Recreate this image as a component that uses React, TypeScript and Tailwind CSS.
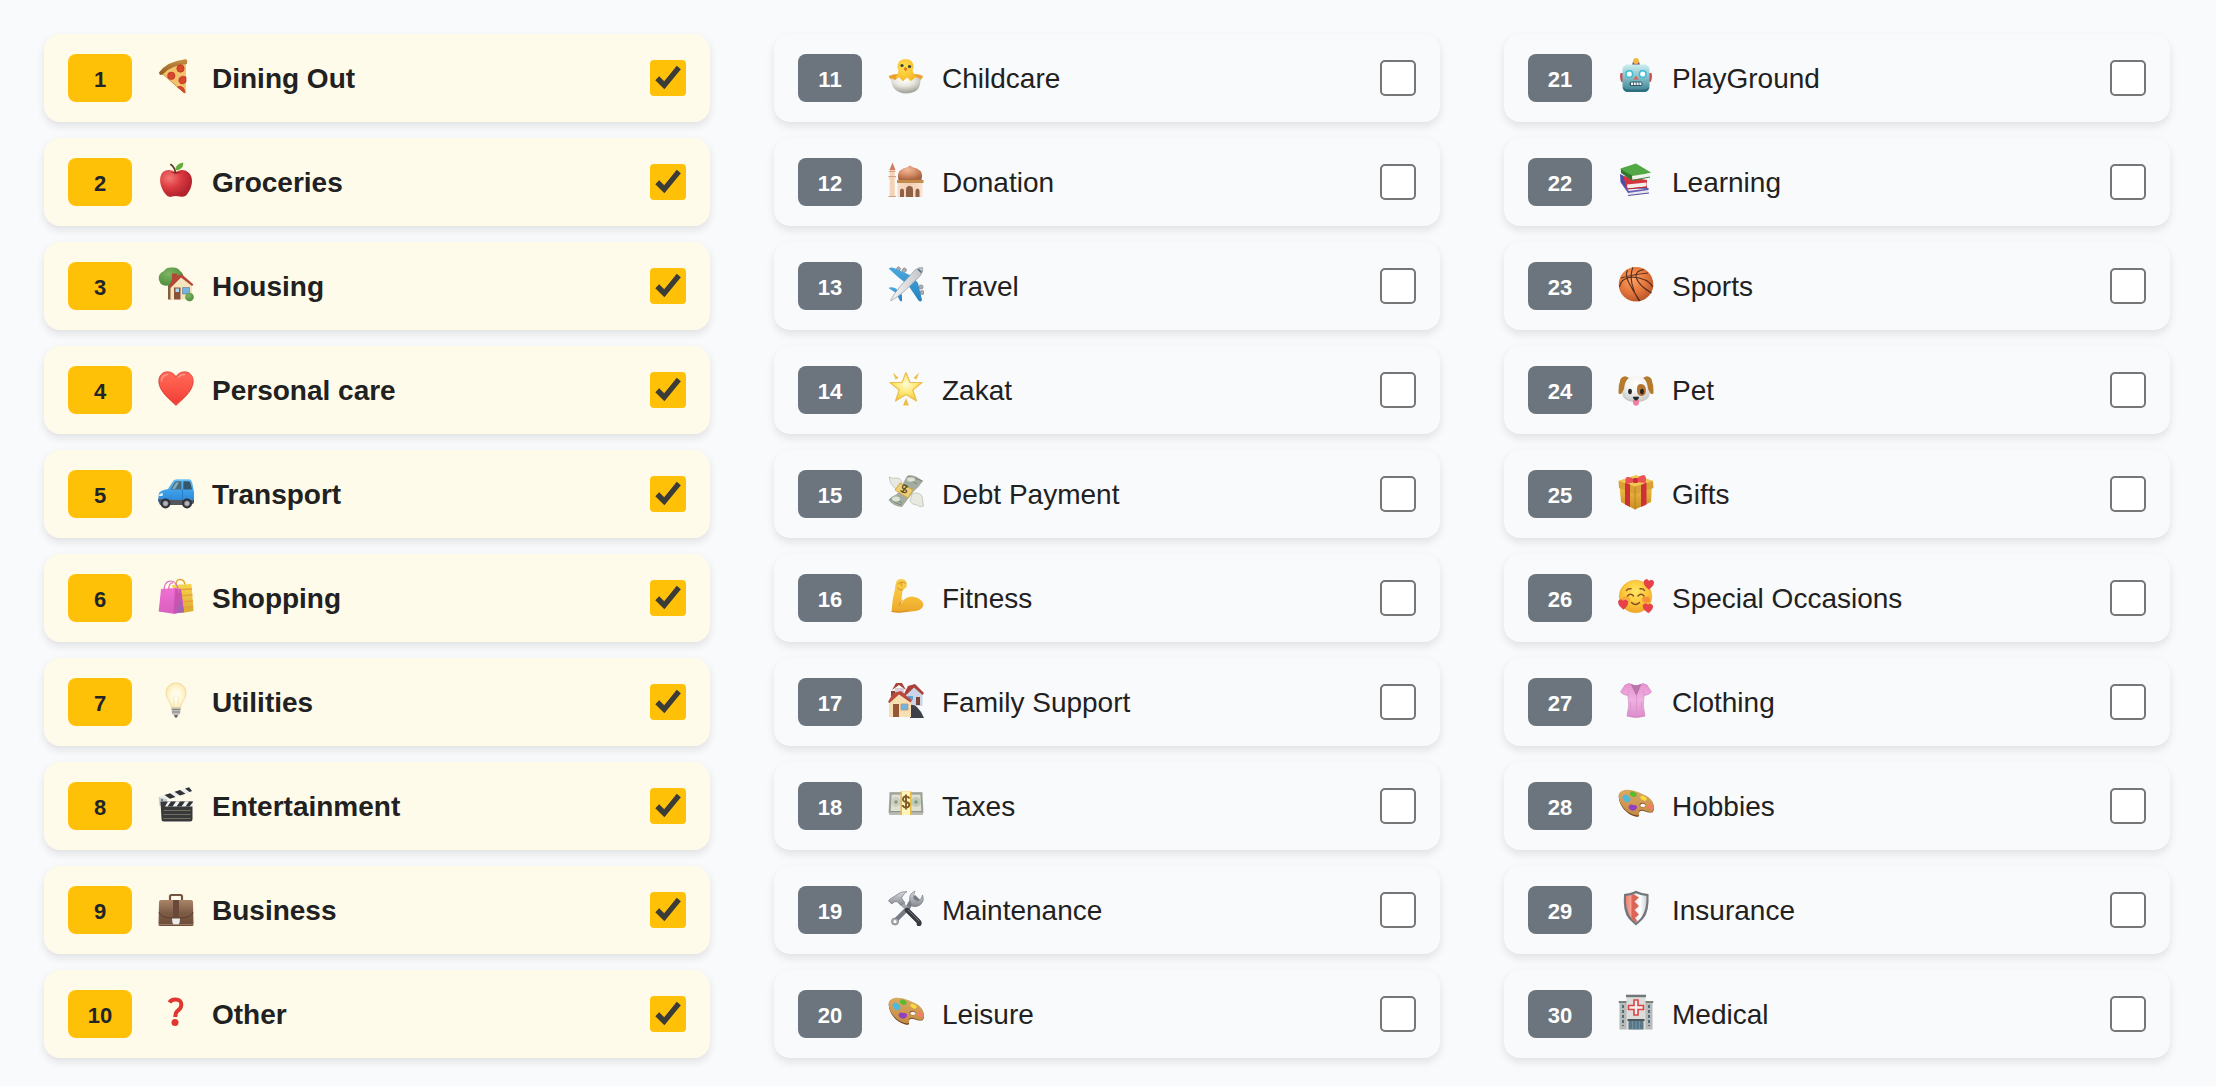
import type { ReactNode } from 'react';

type Category = { name: string; icon: ReactNode };

const Gradient = ({ id, stops, across }: { id: string; stops: string[]; across?: boolean }) => (
  <linearGradient id={id} x1="0" y1="0" x2={across ? 1 : 0} y2={across ? 0 : 1}>
    {stops.map((color, i) => (
      <stop key={i} offset={i / (stops.length - 1)} stopColor={color} />
    ))}
  </linearGradient>
);

const Radial = ({ id, stops, cx = 0.4, cy = 0.35 }: { id: string; stops: string[]; cx?: number; cy?: number }) => (
  <radialGradient id={id} cx={cx} cy={cy} r="0.7">
    {stops.map((color, i) => (
      <stop key={i} offset={i / (stops.length - 1)} stopColor={color} />
    ))}
  </radialGradient>
);

const Paints = () => (
  <svg className="absolute h-0 w-0" aria-hidden="true">
    <defs>
      <Gradient id="crust" stops={['#c99045', '#8f5a20']} />
      <Radial id="apple" stops={['#f37a76', '#dc3c42', '#b3222d']} cx={0.3} cy={0.3} />
      <Radial id="foliage" stops={['#7fb562', '#4b8c3c']} />
      <Gradient id="heart" stops={['#ff6a58', '#fb5547', '#ee3a35']} />
      <Gradient id="carBody" stops={['#6cc2f8', '#3b9fe8', '#2a80d2']} />
      <Gradient id="pinkBag" stops={['#f16fd4', '#d95fbe']} />
      <Gradient id="yellowBag" stops={['#f6d54e', '#dba92e']} />
      <Radial id="bulb" stops={['#ffffff', '#fff6d0', '#f5d98a']} cx={0.5} cy={0.5} />
      <Gradient id="leather" stops={['#a98468', '#7d5b45', '#6b4b38']} />
      <Radial id="chick" stops={['#ffe14f', '#f6b526']} />
      <Radial id="shell" stops={['#ffffff', '#e9e7dd', '#a8aaa0']} cx={0.45} cy={0.2} />
      <Radial id="dome" stops={['#f3b999', '#d8906c', '#a9633f']} cx={0.4} cy={0.3} />
      <Gradient id="stone" stops={['#f8dcc8', '#f2ceb2', '#f9e4d2']} across />
      <Gradient id="planeBody" stops={['#f7f7f8', '#c0c2c6']} across />
      <Gradient id="planeWing" stops={['#49a9df', '#2583c0']} />
      <Radial id="star" stops={['#fffbd2', '#ffe66c', '#f3b931']} cx={0.5} cy={0.4} />
      <Gradient id="skin" stops={['#f9cd4e', '#f8c03a', '#e9a62b']} />
      <Gradient id="steel" stops={['#d8dade', '#84878f']} />
      <Gradient id="robot" stops={['#cdeef0', '#7fbcc6', '#3c7f90']} />
      <Radial id="ball" stops={['#fba263', '#ea7b3f', '#b75426']} />
      <Radial id="fur" stops={['#ffffff', '#f2f2f0', '#c6c6c4']} cx={0.5} cy={0.3} />
      <Gradient id="box" stops={['#eebf43', '#cb8e22']} />
      <Radial id="face" stops={['#ffe766', '#fdc93a', '#ef9f25']} cx={0.5} cy={0.35} />
      <Gradient id="blouse" stops={['#e893cf', '#eeb1e0', '#dd8bcb']} />
      <Gradient id="wood" stops={['#dca962', '#c48a46']} />
      <Gradient id="shieldRed" stops={['#ef8375', '#f4a597', '#e1604f']} across />
      <Gradient id="shieldWhite" stops={['#d6dadd', '#ffffff', '#cfd3d6']} across />
    </defs>
  </svg>
);

const palette = (
  <>
    <path d="M.7 10C2 4.200 9 3.500 15 5.500C22 7.500 31 11 34 16C36.500 20 36.500 24.500 34.500 26.300C31.500 27.300 28 25.500 25.500 25C22 24 20.500 26 21 28.500C21.500 31 20 31.300 16.500 30.300C9 28.300 .5 20 .7 10Z" fill="#6f431b" />
    <path d="M.7 9C2 3.500 9 3 15 4.500C22 6.500 31 10 34 15C36.500 19 36.500 23.500 34.500 25.500C31.500 27 28 25 25.500 24C22 23 20.500 25 21 27.500C21.500 29.500 20 30 16.500 29C9 27 .5 19 .7 9Z" fill="url(#wood)" />
    <ellipse cx="24.500" cy="19" rx="3" ry="2.300" fill="#8d5f33" />
    <ellipse cx="24.800" cy="19.400" rx="2.500" ry="1.700" fill="#fbf9f2" />
    <ellipse cx="8.500" cy="12.500" rx="4.200" ry="3.100" transform="rotate(35 8.500 12.500)" fill="#4dbadd" />
    <ellipse cx="15.300" cy="8.200" rx="3.500" ry="2.500" transform="rotate(25 15.300 8.200)" fill="#5cb932" />
    <ellipse cx="25.500" cy="12.200" rx="3.400" ry="2" transform="rotate(28 25.500 12.200)" fill="#f7dc3e" />
    <ellipse cx="32" cy="20.500" rx="3.500" ry="2" transform="rotate(38 32 20.500)" fill="#f67d68" />
    <path d="M10.500 21Q12 17.500 15 19Q19.500 18.500 19 22Q17 25.500 14 24.500Q11 24 10.500 21Z" fill="#9140c2" />
  </>
);

const topCategories: Category[] = [
  {
    name: 'Dining Out',
    icon: (
      <>
        <path d="M4 15.500Q13 7 28 5L27.800 34.500Q27.500 36 25.800 34.500Z" fill="#f3c26b" />
        <path d="M4 15.500L25.800 34.500Q27.500 36 27.800 33.500" fill="none" stroke="#d39a46" strokeWidth="1" />
        <path d="M1 14.500Q9 3.500 27 1.300Q29.500 1 29.200 3.500L28.800 6Q12 7.500 4.500 16.500Q1 18 1 14.500Z" fill="url(#crust)" />
        <g fill="#d8482c" stroke="#b93420" strokeWidth=".7">
          <circle cx="22.500" cy="10.500" r="3.700" />
          <circle cx="13.300" cy="17.800" r="3.700" />
          <path d="M28 19Q24 17 21.300 20Q19.800 23.500 22.500 25.500Q25.500 26.800 28 24Z" />
          <path d="M19.500 29Q22 27.500 25 29.500Q27 31.500 26.500 34.500L25.500 34Z" />
        </g>
      </>
    ),
  },
  {
    name: 'Groceries',
    icon: (
      <>
        <path d="M17.500 10Q10 6 5 10C0 15 2 25 7 31.500Q10 36 14 34.500Q17.500 33.500 22 34.500Q27 36 30 31C34.500 25 36 15 30.500 10.500Q25 6 17.500 10Z" fill="url(#apple)" />
        <path d="M13 10Q18 13.500 24 9.800Q18 11 13 10Z" fill="#9e1c26" />
        <path d="M12.800 2.500Q16.500 5 17.500 10.500" fill="none" stroke="#5b3520" strokeWidth="1.600" strokeLinecap="round" />
        <path d="M17.500 8.500Q17 2 25.300 .5Q25.500 8 17.500 8.500Z" fill="#62ad3b" />
      </>
    ),
  },
  {
    name: 'Housing',
    icon: (
      <>
        <path d="M10 17H14V33.500H10Z" fill="#80603f" />
        <path d="M1 14Q-.5 8 6 5Q8 1 14 1.500Q20 1 22 5Q27 8 24.500 15Q22 19 13 19Q6 21 2.500 17.500Z" fill="url(#foliage)" />
        <path d="M14 7.500H19V13H14Z" fill="#a84a36" />
        <path d="M12.500 20L23 9.500L34 18V33.500H12.500Z" fill="#f5e5bc" />
        <path d="M11 21L15 10.500L24 8.500L35.500 18.500L34 20L23 11.500L12.500 22Z" fill="#b6483a" />
        <path d="M16 21.500H22.500V33.500H16Z" fill="#89503a" />
        <path d="M17.500 22.500H21V26H17.500Z" fill="#a8d7ee" />
        <path d="M24.500 21.500H31.500V28H24.500Z" fill="#75b2df" stroke="#7d8794" strokeWidth=".8" />
        <circle cx="31.500" cy="31" r="4.300" fill="url(#foliage)" />
      </>
    ),
  },
  {
    name: 'Personal care',
    icon: (
      <>
        <path d="M18 35.500C14 31 .8 22 .8 11.500C.8 5 5 1.800 9.500 1.800C13.500 1.800 16.500 4 18 7C19.500 4 22.500 1.800 26.500 1.800C31 1.800 35.200 5 35.200 11.500C35.200 22 22 31 18 35.500Z" fill="url(#heart)" stroke="#d7382f" strokeWidth=".8" />
        <path d="M3.500 11Q4 5 9.500 4.500M20.500 7Q23 4.300 26.500 4.500" fill="none" stroke="#ff9b8c" strokeWidth="1.300" strokeLinecap="round" />
      </>
    ),
  },
  {
    name: 'Transport',
    icon: (
      <>
        <path d="M1 19Q3 16 10 15L15 7Q16 5.500 19 5.300L31 5.300Q33.500 5.500 34.300 9L36 18V28L33 30H2L0 27Z" fill="url(#carBody)" />
        <path d="M12.500 15.500L16.500 8.500Q17.300 7.300 19 7.200H23.500V15.500Z" fill="#4a6b7c" />
        <path d="M25.300 7.200H30.500Q32 7.200 32.500 9L34 15.500H25.300Z" fill="#35576a" />
        <path d="M14 15L18 8.500H21L17 15Z" fill="#80aebd" />
        <path d="M0 25L16 26H36V29L33 31H2Z" fill="#53575d" />
        <path d="M24.500 15.500V26" stroke="#1d71b9" strokeWidth=".7" />
        <path d="M1.500 20L5 19L4.500 22L1 22Z" fill="#e2f2fb" />
        <g fill="#2d2f34">
          <circle cx="7.500" cy="29.500" r="4.900" />
          <circle cx="29" cy="29.500" r="4.900" />
        </g>
        <g fill="#b1b5ba" stroke="#64676b" strokeWidth=".7">
          <circle cx="7.500" cy="29.500" r="2.700" />
          <circle cx="29" cy="29.500" r="2.700" />
        </g>
      </>
    ),
  },
  {
    name: 'Shopping',
    icon: (
      <>
        <path d="M18 7Q18 1.500 22 1.500Q27 1.500 27 8" fill="none" stroke="#dda52b" strokeWidth="1.300" />
        <path d="M14 7L33.500 6L35.500 33L24 35Z" fill="url(#yellowBag)" />
        <path d="M15 12L34 11M18 18L34.500 17M20 24L35 23M22 30L35.300 29" stroke="#e9a03a" strokeWidth="1.500" />
        <path d="M3 11L18 10L23 11L26 34L15.500 35.700L.7 33.500Z" fill="url(#pinkBag)" />
        <path d="M17 10.500L23 11.500L26 34L15.500 35.700Z" fill="#c954b0" />
        <path d="M22.500 21L26 34L18 35Z" fill="#a463b6" />
        <path d="M6 15Q5.500 3 13 3Q19 3 21 15M10.500 12Q11 4.500 15 5" fill="none" stroke="#dd70be" strokeWidth="1.200" />
      </>
    ),
  },
  {
    name: 'Utilities',
    icon: (
      <>
        <path d="M18 1C24.500 1 28 5.500 28 11C28 17 23.500 19 22.500 26H13.500C12.500 19 8 17 8 11C8 5.500 11.500 1 18 1Z" fill="url(#bulb)" stroke="#ecd293" strokeWidth=".7" />
        <path d="M16 25L15.500 15Q18 12 20.500 15L20 25" fill="none" stroke="#f4e3b2" strokeWidth=".7" />
        <path d="M13.500 25.500H22.500L22 32L19.500 33.500H16.500L14 32Z" fill="#bdbdb8" />
        <path d="M13.700 27.500H22.500M13.900 30H22.300" stroke="#878783" strokeWidth="1" />
        <path d="M16 33.300H20Q19.500 35.700 18 35.700Q16.500 35.700 16 33.300Z" fill="#54544f" />
      </>
    ),
  },
  {
    name: 'Entertainment',
    icon: (
      <>
        <path d="M.5 11L32.500 .7L34 5.500L2.500 16Z" fill="#eceeee" />
        <path d="M6.500 9L12 7.300L17.500 11L12 12.800ZM16.500 5.800L22 4L27.500 7.700L22 9.500ZM27 2.500L31 1.200L34 5L31.500 6Z" fill="#303234" />
        <path d="M.7 11L9 13.500V20H1.500Z" fill="#c5c8ca" />
        <path d="M2.500 15.500H34.500V33Q34.500 35.500 32 35.500H6Q3.500 35.500 3.500 33Z" fill="#37393b" />
        <path d="M10 15.500H35V20.500H7Z" fill="#f1f2f2" />
        <path d="M13 15.500H18L14.500 20.500H9.500ZM22 15.500H27L23.500 20.500H18.500ZM31 15.500H35V16L31.500 20.500H27.500Z" fill="#303234" />
        <path d="M5.500 24.500H32.500M5.500 28.500H32.500M5.500 32.500H32.500" stroke="#817f65" strokeWidth=".8" />
        <circle cx="4" cy="14" r="1" fill="#606468" />
      </>
    ),
  },
  {
    name: 'Business',
    icon: (
      <>
        <path d="M12 10V6.500Q12 5 13.500 5H22.500Q24 5 24 6.500V10" fill="none" stroke="#745443" strokeWidth="2.200" />
        <path d="M3 10H33Q35 10 35 12L35.500 34.500Q35.500 36 34 36H2Q.5 36 .5 34.500L1 12Q1 10 3 10Z" fill="url(#leather)" />
        <path d="M1 22Q2 27 12 28H24Q34 27 35 22" fill="none" stroke="#5c3f30" strokeWidth="1" />
        <path d="M15 10H21V28H15Z" fill="#6b493a" />
        <path d="M14 28.500H22L21.500 33Q21 35 18 35Q15 35 14.500 33Z" fill="#ebecec" />
        <path d="M1 34.500H35" stroke="#a98972" strokeWidth=".8" />
      </>
    ),
  },
  {
    name: 'Other',
    icon: (
      <>
        <path d="M11.500 8.500Q13 5.500 17.500 5.500Q23.500 5.500 23.300 11Q23.200 14.500 19.800 16.700Q17.300 18.500 17.300 23" fill="none" stroke="#de3830" strokeWidth="4" />
        <circle cx="17" cy="28.500" r="3.500" fill="#e0382f" />
      </>
    ),
  },
];

const middleCategories: Category[] = [
  {
    name: 'Childcare',
    icon: (
      <>
        <path d="M9 16Q5 16 .7 18Q2 23 8 23H28Q34 23 35 18Q31 16 27 16Z" fill="#eaa12d" />
        <path d="M8 24V18Q11 15 10.500 12Q9 10 9.500 7Q11 1 17.500 1Q24 1 25.500 7Q26 10 24.500 12Q24.500 15 28 18V24Z" fill="url(#chick)" />
        <path d="M3 20L7 22L11 19L15 23.500L19 19.500L23 23L28 19L32.500 21Q33 35.500 18 35.500Q3.500 35 3 20Z" fill="url(#shell)" />
        <g fill="#32443a">
          <circle cx="14" cy="7.500" r="1.600" />
          <circle cx="21.500" cy="8.500" r="1.600" />
        </g>
        <path d="M15.500 10.500L17.500 9L19.500 11L17.500 13.500Z" fill="#e96f26" />
      </>
    ),
  },
  {
    name: 'Donation',
    icon: (
      <>
        <path d="M1.500 8L4.500 .5L7.500 8Z" fill="#cf7d62" />
        <path d="M1.500 8H7V14H8V17H7V35H1.500V17H.7V14H1.500Z" fill="url(#stone)" />
        <path d="M.5 14.500H8M1 9.500H7.500M.5 34.500H8" stroke="#d3a184" strokeWidth="1" />
        <path d="M10.500 18Q8 10 15 6.500Q20 5.500 22 3.500Q24 5.500 29 6.500Q36 10 33.500 18Z" fill="url(#dome)" />
        <path d="M9.500 20H34.500V35H9.500Z" fill="url(#stone)" />
        <path d="M9 18H35.500V21H9Z" fill="#c48c4a" />
        <path d="M18 35V28Q18 24 21.500 24Q25 24 25 28V35ZM12 35V29Q12 26.500 14 26.500Q16 26.500 16 29V35ZM27.500 35V29Q27.500 26.500 29.500 26.500Q31.500 26.500 31.500 29V35Z" fill="#8f5f46" />
      </>
    ),
  },
  {
    name: 'Travel',
    icon: (
      <>
        <g fill="#a8abb0" stroke="#73767b" strokeWidth=".5">
          <rect x="8.500" y=".8" width="3.800" height="4.500" rx="1.500" transform="rotate(35 10 3)" />
          <rect x="14.500" y="1.800" width="3.800" height="4.500" rx="1.500" transform="rotate(35 16 4)" />
          <rect x="31" y="19" width="4" height="4" rx="1.500" />
          <rect x="32" y="24.500" width="4" height="4" rx="1.500" />
        </g>
        <path d="M.7 2.500Q3 .8 6 2L24 10L30 17L34 34Q33 36.500 30.500 34.500L20 19L10 11Z" fill="url(#planeWing)" />
        <path d="M.5 22Q3 20.500 8 22.500L14 29L14 35Q12.500 36 11.500 34L8 27Z" fill="url(#planeWing)" />
        <path d="M2.500 34.500Q6 28 12 20.500L27 4Q31 .8 34.500 1.500Q36 4.500 32.500 9.500L16 25.500Q9 31.500 3 34.700Z" fill="url(#planeBody)" stroke="#9ea1a7" strokeWidth=".8" />
        <path d="M30 3L33.500 6.500" stroke="#566c7e" strokeWidth="1.700" />
      </>
    ),
  },
  {
    name: 'Zakat',
    icon: (
      <>
        <path d="M18 2.500L22 12.500L34 12.500L24.800 20L28.500 31L18 24.500L7.500 31L11.200 20L2 12.500L14 12.500Z" fill="url(#star)" stroke="#edbd4d" strokeWidth="1.200" strokeLinejoin="round" />
        <path d="M5 2.500L10.500 8L7.500 9.500ZM31 2.500L25.500 8L28.500 9.500ZM18 28L21 35.500H15Z" fill="#efbe4a" />
      </>
    ),
  },
  {
    name: 'Debt Payment',
    icon: (
      <>
        <g fill="#e8eae1" stroke="#b5bbae" strokeWidth=".7">
          <path d="M1 3Q5 5 8 4Q12 3 14 8L11 15Q6 15 5 12Q2 10 1 3Z" />
          <path d="M24 20Q30 17 34 22L35.500 32Q32 34 29 31Q24 31 22 27Z" />
        </g>
        <path d="M19 2Q24 0 29 3L35 7Q31 13 26 17L14 33Q6 33 .5 26Q4 22 9 20Z" fill="#a4aca0" />
        <path d="M20 2Q26 4 34.500 7M2 25Q7 29 13 31M20 5L29 10M6 24L14 29" stroke="#727b72" strokeWidth=".8" fill="none" />
        <ellipse cx="23" cy="5.500" rx="4" ry="2.200" fill="#dce2d4" />
        <ellipse cx="8" cy="25" rx="4" ry="2.500" fill="#dce2d4" />
        <path d="M12 9L25 16L20 24L7 16Z" fill="#f0ce75" stroke="#ce9e39" strokeWidth=".8" />
        <path d="M20 13Q15 9 14.500 13Q14.500 15 17 15.500Q20 17 17.500 18.500Q15 19 12.500 16.500M14 18.500L19 12" stroke="#5d522e" strokeWidth="1.300" fill="none" />
      </>
    ),
  },
  {
    name: 'Fitness',
    icon: (
      <>
        <path d="M9.500 2Q13 0 17 2Q19.500 4 18.500 9L14.500 12.500L13 25.500Q17 18.500 24 18.500Q34 19.500 35.500 27Q34 33.500 23 33.500Q12 35.500 3.500 34Q4 22 7 11Q7.500 4 9.500 2Z" fill="url(#skin)" />
        <path d="M10 6Q14 2 17.500 5.500M14 8Q12 6 13.500 4.500M9.500 10Q12 13 14.500 12M11.500 27Q12 23.500 14.500 22M4 33.500Q11 35 20 33" fill="none" stroke="#d4912a" strokeWidth="1" strokeLinecap="round" />
      </>
    ),
  },
  {
    name: 'Family Support',
    icon: (
      <>
        <path d="M7 6H16V14H7Z" fill="#d9cddb" />
        <path d="M4 8L8 1H14L18 8L11 3Z" fill="#a84439" />
        <path d="M18.500 10L26 4L34.500 12V24H18.500Z" fill="#cbd5e7" />
        <path d="M15.500 13L20 4L27 2L36 11L34.500 13L26 5.500L17 14Z" fill="#aa4138" />
        <path d="M28 15H32V23H28Z" fill="#7d4535" />
        <path d="M20 14H25V18H20Z" fill="#63a4d7" />
        <path d="M16 24Q25 21 29 25Q34 30 36 36H22Q24 29 17 28Z" fill="#3e4248" />
        <path d="M3 9H7V14H3Z" fill="#7c4637" />
        <path d="M1 20L10 11L23 20V35H1Z" fill="#f7dfb4" />
        <path d="M0 20L5 11L13 9L24 18.500L22.500 20.500L11 12.500L1.500 21Z" fill="#b9483d" />
        <path d="M5 22H11V35H5Z" fill="#955735" />
        <path d="M13 22H20V28H13Z" fill="#71b3e1" stroke="#b89674" strokeWidth=".8" />
      </>
    ),
  },
  {
    name: 'Taxes',
    icon: (
      <>
        <path d="M1.500 6H34.500L35.500 27H.5Z" fill="#aeb1a8" />
        <path d="M3 8H33L34 25.500H2Z" fill="#dfe0d2" stroke="#92968a" strokeWidth="1.200" />
        <circle cx="8" cy="16" r="5" fill="#ccd0c2" />
        <circle cx="28" cy="16" r="5" fill="#c0cab6" />
        <circle cx="8" cy="16" r="1.800" fill="#8d9687" />
        <circle cx="28" cy="16" r="1.800" fill="#78a07c" />
        <path d="M1 28H35" stroke="#a3a69c" strokeWidth="1.500" />
        <path d="M12.500 5.500H23.500V29H12.500Z" fill="#e9bb3f" />
        <path d="M14 5.500H22V29H14Z" fill="#fff2ba" />
        <path d="M21.500 12.500Q20.500 10.500 18 10.500Q14.800 10.700 15 13.500Q15.300 15.800 18 16Q21.500 16.500 21.300 19Q21 21.500 18 21.500Q15.300 21.500 14.500 19M18 8.500V23.500" fill="none" stroke="#7e5c27" strokeWidth="1.900" />
      </>
    ),
  },
  {
    name: 'Maintenance',
    icon: (
      <>
        <path d="M24 15L29 10L27 8Q22 12 20 18L6 32" fill="none" stroke="#777b83" strokeWidth="4.500" />
        <path d="M22 11Q20 4 27 1Q25 5 26 9L30 11Q34 9 34.500 5Q37 11 32 15Q28 18 23.500 16Z" fill="url(#steel)" stroke="#72757b" strokeWidth=".6" />
        <circle cx="7" cy="31.500" r="3.500" fill="#a8abb2" stroke="#74777d" strokeWidth=".7" />
        <circle cx="7" cy="31.500" r="1.500" fill="#fff" />
        <path d="M2 9L7 6Q12 1 19 1.500Q15 4 13.500 8L17 13L13.500 16L9 11.500L6 12L4 14L.5 11Z" fill="url(#steel)" stroke="#656a72" strokeWidth=".6" />
        <path d="M15 15L20 19.500" stroke="#a4a7ad" strokeWidth="4" />
        <path d="M19 20L30.500 31.500Q32 33 31 34" stroke="#383a3f" strokeWidth="4.600" strokeLinecap="round" fill="none" />
        <path d="M20 20L31 31" stroke="#73767c" strokeWidth="1" strokeLinecap="round" />
      </>
    ),
  },
  { name: 'Leisure', icon: palette },
];

const otherCategories: Category[] = [
  {
    name: 'PlayGround',
    icon: (
      <>
        <path d="M2.500 15H6V24H3.500Q2 22 2 18ZM33.500 15H30V24H32.500Q34 22 34 18Z" fill="#c84e50" />
        <path d="M14 7L15 3.500H21L22 7Z" fill="#795779" />
        <circle cx="18" cy="3" r="2.900" fill="#f3ba43" />
        <rect x="4.500" y="6.500" width="27" height="27.500" rx="5" fill="url(#robot)" />
        <path d="M5 29Q6 34 10 34H26Q30 34 31 29Q29 31.500 25 31.500H11Q7 31.500 5 29Z" fill="#2d6e80" />
        <g fill="#fff" stroke="#37bed3" strokeWidth="1.500">
          <circle cx="11.300" cy="16" r="3.300" />
          <circle cx="24.700" cy="16" r="3.300" />
        </g>
        <path d="M18 17.500L20.500 21.500H15.500Z" fill="#e75e51" />
        <rect x="11.500" y="23.500" width="13" height="4.500" rx="2" fill="#315564" />
        <path d="M13 25.800H23.500" stroke="#f5f9fa" strokeWidth="2.500" strokeDasharray="2 .8" />
      </>
    ),
  },
  {
    name: 'Learning',
    icon: (
      <>
        <path d="M2 12L12 17L31 26.500L11 32L2.500 20Z" fill="#4e4caa" />
        <path d="M9 26L30.500 27V31.500L11 33.500Z" fill="#e9e8ec" />
        <path d="M2.500 20L11 29L30.500 26.500V28L10 31Z" fill="#6660b8" />
        <path d="M10 33.500L31 31" stroke="#554fa2" strokeWidth="1.200" />
        <path d="M5 14L29 18V25L9 27Z" fill="#d4363e" />
        <path d="M9 22.500L28.500 20.500V24.500L9.500 26.500Z" fill="#f2eeee" />
        <path d="M9 27L29 25" stroke="#b9232e" strokeWidth="1" />
        <path d="M2.500 6.500L18 1.500L33 10.500L14 16.500L3 9Z" fill="#52a844" />
        <path d="M3 7.500L14 13.500V18.500L3 11Z" fill="#31772f" />
        <path d="M14 14L32.500 11L31.500 14.500L14.500 18Z" fill="#f3f3ef" />
        <path d="M13.500 18.500L32 15" stroke="#34843b" strokeWidth="1" />
      </>
    ),
  },
  {
    name: 'Sports',
    icon: (
      <>
        <circle cx="18" cy="18.300" r="17.300" fill="url(#ball)" />
        <path d="M3 12Q15 8.500 30 7M1.500 21Q3 12 14 11Q30 12 35 21M9.500 4Q7 9 10.500 16Q15 25 22 35M15 1.300Q12 8 14 18Q16 27 21 35M26 3.500Q17 5 18 11Q20 19 33.500 27" fill="none" stroke="#582f20" strokeWidth="1.150" />
      </>
    ),
  },
  {
    name: 'Pet',
    icon: (
      <>
        <path d="M11 8Q6 4 2.500 9Q0 16 .5 23Q2 26 6 21ZM25 8Q30 4 33.500 9Q36 16 35.500 23Q34 26 30 21Z" fill="#b67a2c" />
        <path d="M6 19Q7 6 18 6Q29 6 30 19Q34 24 29 29Q24 33 18 32Q12 33 7 29Q2 24 6 19Z" fill="url(#fur)" />
        <path d="M19 19Q19 14 23 14Q27.500 14 28 20Q28 26 23 26Q18.500 25 19 19Z" fill="#b27232" />
        <path d="M15 30H21V33Q20.500 35.800 18 35.800Q15.500 35.800 15 33Z" fill="#f17ea0" />
        <path d="M15.200 27H20.800Q20.500 30 18 30Q15.500 30 15.200 27M18 29V31" fill="#29282b" stroke="#29282b" strokeWidth=".6" />
        <ellipse cx="12" cy="21.500" rx="1.900" ry="2.800" fill="#292425" />
        <ellipse cx="24" cy="21.500" rx="1.900" ry="2.800" fill="#292425" />
      </>
    ),
  },
  {
    name: 'Gifts',
    icon: (
      <>
        <path d="M1.500 12L17 19L34 12L33 28L17 35.500L3 28Z" fill="url(#box)" />
        <path d="M.5 7L18 2L35 7L35.500 14L17 20.500L1 14Z" fill="#daa234" />
        <path d="M.5 7L18 1L35 7L17 12.500Z" fill="#f0c753" />
        <path d="M17 13V35.500" stroke="#b87822" strokeWidth=".8" />
        <path d="M7 8.500L12 10.500V33L7 30.500ZM23 11L28.500 8.500V30.500L23 33Z" fill="#cd3039" />
        <path d="M9 3Q6.500 4 8 10L17 8V6Q13 2.500 9 3ZM26 1Q29 2 27.500 9L18 8V6Q21 1.500 26 1Z" fill="#eb5154" />
        <rect x="15" y="4" width="5" height="5" rx="1.500" fill="#c92f39" />
      </>
    ),
  },
  {
    name: 'Special Occasions',
    icon: (
      <>
        <circle cx="17.500" cy="18.500" r="16.300" fill="url(#face)" stroke="#eaa231" strokeWidth=".5" />
        <ellipse cx="8" cy="21.500" rx="4" ry="3" fill="#f58a43" opacity=".5" />
        <ellipse cx="28" cy="21.500" rx="4" ry="3" fill="#f46e43" opacity=".6" />
        <path d="M8.500 12.500Q9.500 10.500 13 10.800M22 10.800Q25.500 10.500 26.500 12.500M9.500 18Q12.500 14.500 15.500 18M20 18Q23 14.500 26 18M13.500 24.500Q17.500 28.500 21.500 24.500" fill="none" stroke="#855023" strokeWidth="1.500" strokeLinecap="round" />
        <g fill="#e84149" stroke="#cc303a" strokeWidth=".3">
          <path d="M31 11.500Q25 7 26 3Q28.500 -.5 31 3Q34.500 .5 36 4Q36 7.500 31 11.500Z" />
          <path d="M5.500 31.500Q-.5 27 .3 23Q3 20 5 23Q8.500 20.500 10 24Q10 28 5.500 31.500Z" />
          <path d="M30.500 35Q24 31 25 27Q27.500 24 30 27Q33.500 24.500 35 28Q35 31.500 30.500 35Z" />
        </g>
      </>
    ),
  },
  {
    name: 'Clothing',
    icon: (
      <>
        <path d="M11 1.500L7 3L2.500 10Q5 13 10 13.500Q12 23 9 34Q18 37 27 34Q24 23 26 13.500Q31 13 33.500 10L29 3L25 1.500L18 4Z" fill="url(#blouse)" stroke="#cf82bd" strokeWidth=".7" />
        <path d="M12.500 2Q18 4.500 23.500 2L18.500 14Z" fill="#b777ab" />
        <path d="M10 13.500L10.500 9M26 13.500L25.500 9M12.500 20Q13 28 11.500 34M23.500 20Q23 28 24.500 34M18.500 14V33" fill="none" stroke="#d994cb" strokeWidth=".8" />
      </>
    ),
  },
  { name: 'Hobbies', icon: palette },
  {
    name: 'Insurance',
    icon: (
      <>
        <path d="M6 4Q13 3.500 18 .8Q23 3.500 30.500 4Q31.500 22 25 29Q21 33 18 35.500Q15 33 11 29Q4.500 22 6 4Z" fill="#73777b" />
        <path d="M8 6Q14 5.500 18 3.300V32.500Q7 25 8 6Z" fill="url(#shieldRed)" />
        <path d="M15.500 4.500L18 3.300Q22 5.500 28.500 6Q29 25 18 32.500L15.500 30Z" fill="url(#shieldWhite)" />
        <path d="M13.500 5.300L16 4.500L21 7.500L16.500 11.500L21 16L16.500 20L21 24.500L17 28L19 30.500L18 32.500L13.500 28.500Z" fill="#dd6555" />
      </>
    ),
  },
  {
    name: 'Medical',
    icon: (
      <>
        <path d="M1.500 8H9V35.500H1.500ZM27 8H34.500V35.500H27Z" fill="#b7bab7" />
        <path d="M.7 7H9V9H.7ZM27 7H35.300V9H27Z" fill="#7c807f" />
        <path d="M8.500 2H27.500V35.500H8.500Z" fill="#dcdcda" />
        <path d="M8 .7H28V3.200H8Z" fill="#71777a" />
        <path d="M5 11V32M31 11V32" stroke="#4d6e80" strokeWidth="2" strokeDasharray="3 2" />
        <path d="M16 6H20V11.500H25.500V15.500H20V21H16V15.500H10.500V11.500H16Z" fill="#f8eeee" stroke="#d94448" strokeWidth="1.600" />
        <path d="M10.500 26H25.500V35.500H10.500Z" fill="#58788a" />
        <path d="M9.500 25H26.500V27H9.500Z" fill="#4c565d" />
        <path d="M14.500 27V35.500M18 27V35.500M21.500 27V35.500" stroke="#7f9dac" strokeWidth=".7" />
      </>
    ),
  },
];

const CategoryCard = ({ rank, category, selected }: { rank: number; category: Category; selected: boolean }) => (
  <label
    className={`flex h-[88px] items-center rounded-2xl px-6 shadow-[0_4px_8px_rgba(0,0,0,0.1)] ${
      selected ? 'bg-[#fffbea]' : 'bg-[#f9fafc]'
    }`}
  >
    <span
      className={`flex h-12 w-16 items-center justify-center rounded-lg pt-0.5 text-[22px] font-bold ${
        selected ? 'bg-[#ffc107] text-[#212529]' : 'bg-[#6c757d] text-white'
      }`}
    >
      {rank}
    </span>
    <svg viewBox="0 0 36 36" className="mb-1 ml-[26px] size-9 shrink-0" aria-hidden="true">
      {category.icon}
    </svg>
    <span className={`ml-[18px] flex-1 pt-0.5 text-[28px] leading-[42px] ${selected ? 'font-bold' : 'font-normal'}`}>
      {category.name}
    </span>
    {selected ? (
      <span className="flex size-9 items-center justify-center rounded-[4px] bg-[#ffc107]">
        <svg viewBox="0 0 36 36" className="size-9" aria-hidden="true">
          <path d="M5.300 20.300L9.200 16.200L14.200 21.200L26.800 5.700L30.900 9.300L14.400 29.200Z" fill="#3b3b37" />
        </svg>
      </span>
    ) : (
      <span className="size-9 rounded-[5px] border-2 border-[#767676] bg-white" />
    )}
  </label>
);

const columns = [topCategories, middleCategories, otherCategories];

export default function App() {
  return (
    <main className="h-[1086px] w-full bg-[#f8fafc] px-11 pt-[34px] font-['Liberation_Sans',Arial,sans-serif] text-[#212121]">
      <Paints />
      <div className="grid grid-cols-[repeat(3,666px)] gap-x-16">
        {columns.map((categories, column) => (
          <div key={column} className="flex flex-col gap-4">
            {categories.map((category, row) => (
              <CategoryCard
                key={category.name}
                rank={column * 10 + row + 1}
                category={category}
                selected={column === 0}
              />
            ))}
          </div>
        ))}
      </div>
    </main>
  );
}
